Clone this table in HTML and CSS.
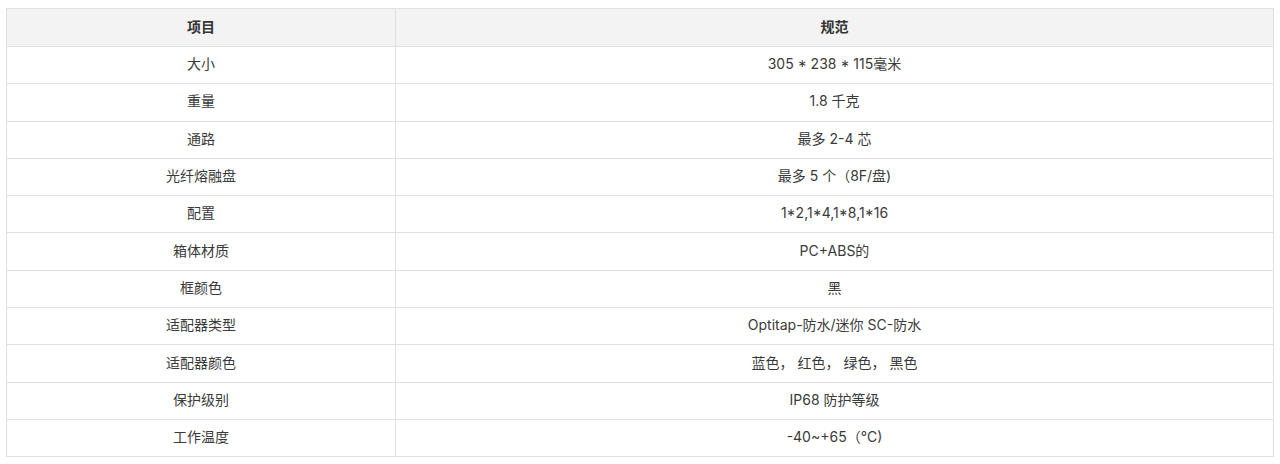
FILE: index.html
```html
<!DOCTYPE html>
<html lang="zh">
<head>
<meta charset="utf-8">
<link rel="stylesheet" href="styles.css">
</head>
<body>
<table class="spec">
  <colgroup><col class="c1"><col class="c2"></colgroup>
  <thead>
    <tr><th>项目</th><th>规范</th></tr>
  </thead>
  <tbody>
    <tr><td>大小</td><td>305 * 238 * 115毫米</td></tr>
    <tr><td>重量</td><td>1.8 千克</td></tr>
    <tr><td>通路</td><td>最多 2-4 芯</td></tr>
    <tr><td>光纤熔融盘</td><td>最多 5 个（8F/盘)</td></tr>
    <tr><td>配置</td><td>1*2,1*4,1*8,1*16</td></tr>
    <tr><td>箱体材质</td><td>PC+ABS的</td></tr>
    <tr><td>框颜色</td><td>黑</td></tr>
    <tr><td>适配器类型</td><td>Optitap-防水/迷你 SC-防水</td></tr>
    <tr><td>适配器颜色</td><td>蓝色， 红色， 绿色， 黑色</td></tr>
    <tr><td>保护级别</td><td>IP68 防护等级</td></tr>
    <tr><td>工作温度</td><td>-40~+65（°C)</td></tr>
  </tbody>
</table>
</body>
</html>
```
FILE: styles.css
```css
html, body { margin: 0; padding: 0; background: #fff; }
body { padding: 8px 6px 0 6px; }
.spec {
  width: 1268px;
  border-collapse: collapse;
  table-layout: fixed;
  font-family: Inter, "Noto Sans CJK SC", sans-serif;
  font-size: 14px;
  color: #3a3a3a;
}
.c1 { width: 389px; }
.spec th, .spec td {
  border: 1px solid #e0e0e0;
  text-align: center;
  vertical-align: middle;
  padding: 0 10px 2px;
  height: 34.3px;
  line-height: 18px;
}
.spec th {
  background: #f3f3f3;
  font-weight: 700;
  color: #333;
  height: 35px;
}
```
